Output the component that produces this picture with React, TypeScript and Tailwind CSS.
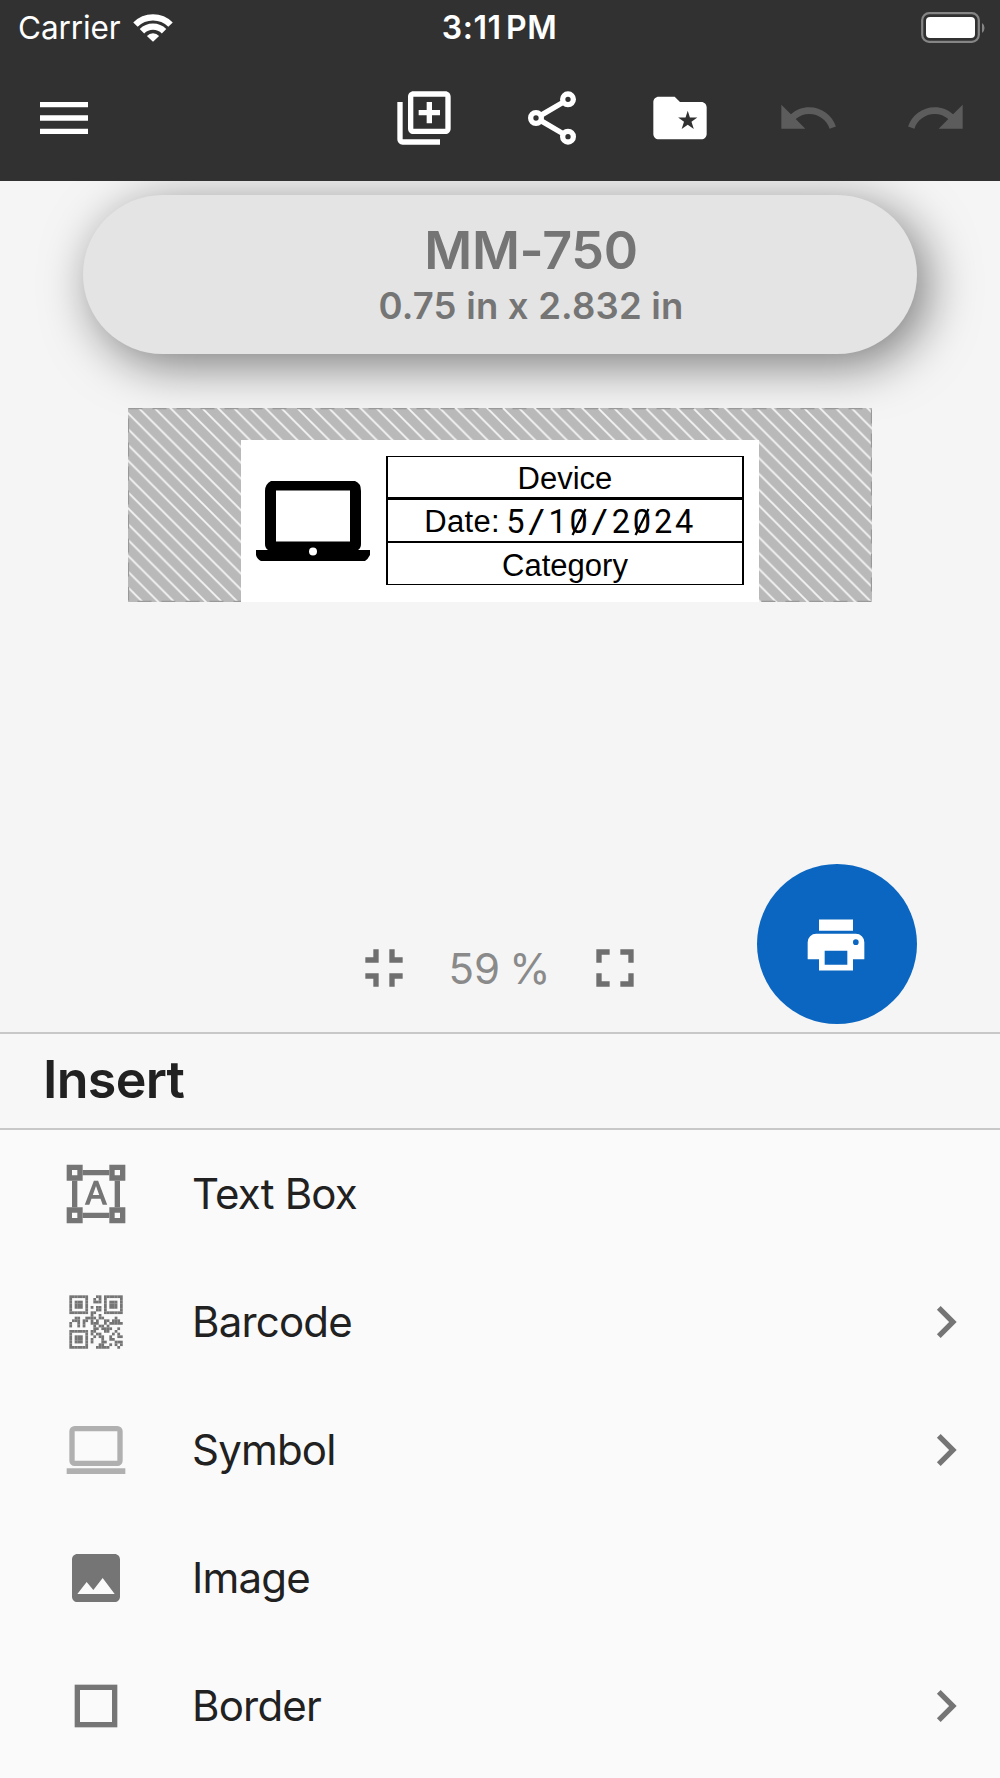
import React from "react";

const QR_ROWS = [
  "11111110001101111111",
  "10000010010101000001",
  "10111010011101011101",
  "10111010000001011101",
  "10111010101101011101",
  "10000010001101000001",
  "11111110110001111111",
  "00000000100100000000",
  "00110011110110000100",
  "01110110101001101110",
  "10010100111001011111",
  "10010100010110100000",
  "00000000011011110010",
  "11111110110001100100",
  "10000010101100001010",
  "10111010010110010011",
  "10111010100010011000",
  "10111010100011000111",
  "10000010000110010101",
  "11111110001111100010",
];

function Glyph({ children, size = 64, className = "" }: { children: React.ReactNode; size?: number; className?: string }) {
  return (
    <svg width={size} height={size} viewBox="0 0 24 24" fill="currentColor" className={`block shrink-0 ${className}`}>
      {children}
    </svg>
  );
}

function StatusBar() {
  return (
    <div className="grid h-[54px] grid-cols-3 items-center pl-[18px] pr-[15px]">
      <div className="flex items-center gap-[12px]">
        <span className="text-[31.5px] leading-[56px] tracking-[-0.100px]">Carrier</span>
        <svg width="40" height="29" viewBox="0 0 42 30" className="mt-[-1px]">
          <g fill="none" stroke="#fff" strokeWidth="6.600">
            <path d="M2.600 12a26 26 0 0 1 36.800 0" />
            <path d="M9.400 18.900a16.400 16.400 0 0 1 23.200 0" />
          </g>
          <path fill="#fff" d="M21 30l-6.400-6.200a9 9 0 0 1 12.800 0z" />
        </svg>
      </div>
      <div className="ml-[-4px] text-center text-[32px] font-semibold leading-[56px] tracking-[0.500px] [word-spacing:-4px]">3:11 PM</div>
      <div className="flex justify-end">
        <svg width="64" height="31" viewBox="0 0 64 31" className="mt-[-2px]">
          <rect x="1.200" y="1.200" width="56.600" height="28.600" rx="7" fill="none" stroke="#858585" strokeWidth="2.200" />
          <rect x="5" y="5" width="49" height="21" rx="4" fill="#fff" />
          <path d="M61 11q2.500 1.500 2.500 5t-2.500 5z" fill="#858585" />
        </svg>
      </div>
    </div>
  );
}

function Toolbar() {
  return (
    <div className="flex h-[127px] items-center px-8">
      <Glyph className="mr-auto">
        <path d="M3 6h18v2H3zM3 11h18v2H3zM3 16h18v2H3z" />
      </Glyph>
      <div className="flex gap-16">
        <Glyph>
          <path d="M4 6H2v14c0 1.100.9 2 2 2h14v-2H4z" />
          <path fillRule="evenodd" d="M20 2H8c-1.100 0-2 .9-2 2v12c0 1.100.9 2 2 2h12c1.100 0 2-.9 2-2V4c0-1.100-.9-2-2-2zm0 14H8V4h12z" />
          <path d="M13 6h2v3h3v2h-3v3h-2v-3h-3V9h3z" />
        </Glyph>
        <Glyph>
          <g fill="none" stroke="currentColor" strokeWidth="2">
            <circle cx="18" cy="5" r="2" />
            <circle cx="6" cy="12" r="2" />
            <circle cx="18" cy="19" r="2" />
            <path d="M7.800 11l8.400-4.900M7.800 13l8.400 4.900" />
          </g>
        </Glyph>
        <Glyph>
          <path d="M20 6h-8l-2-2H4c-1.100 0-2 .9-2 2v12c0 1.100.9 2 2 2h16c1.100 0 2-.9 2-2V8c0-1.100-.9-2-2-2z" />
          <path
            fill="#313131"
            d="M14.900 9.300l.82 2.550 2.780-.05-2.200 1.620.880 2.680-2.280-1.600-2.280 1.600.880-2.680-2.200-1.620 2.780.05z"
          />
        </Glyph>
        <Glyph className="text-[#5c5c5c]">
          <path d="M12.500 8c-2.650 0-5.050.990-6.900 2.600L2 7v9h9l-3.620-3.620c1.390-1.160 3.160-1.880 5.120-1.880 3.540 0 6.550 2.310 7.600 5.500l2.370-.780C21.080 11.030 17.150 8 12.500 8z" />
        </Glyph>
        <Glyph className="text-[#5c5c5c]">
          <path d="M18.400 10.600C16.550 8.990 14.150 8 11.500 8c-4.650 0-8.580 3.030-9.960 7.220L3.900 16c1.050-3.190 4.050-5.500 7.600-5.500 1.950 0 3.730.720 5.120 1.880L13 16h9V7z" />
        </Glyph>
      </div>
    </div>
  );
}

function DateDigits() {
  return (
    <span className="ml-[5px] inline-flex font-['Roboto',sans-serif] text-[32.500px]">
      {"5/10/2024".split("").map((c, i) => (
        <span key={i} className="relative inline-block w-[21.100px] text-center">
          <span className={c === "/" ? "inline-block scale-x-125" : "inline-block"}>{c}</span>
          {c === "0" && (
            <svg width="18" height="30" viewBox="0 0 18 30" className="absolute left-[1.500px] top-[7px]">
              <path d="M2.500 28L15.500 2" stroke="#000" strokeWidth="2.200" />
            </svg>
          )}
        </span>
      ))}
    </span>
  );
}

function LabelPreview() {
  return (
    <div className="relative mx-auto mt-[54px] h-[194px] w-[744px] pl-[112.500px] pr-[113px] pt-[32px]">
      <svg width="744" height="194" className="absolute inset-0">
        <defs>
          <pattern id="hatch" width="15.840" height="15.840" patternUnits="userSpaceOnUse" x="10.700" y="0">
            <path d="M-1 -1L17 17M-1 14.840L1 16.840M14.840 -1L16.840 1" stroke="#f5f5f5" strokeWidth="1.800" />
          </pattern>
        </defs>
        <rect width="744" height="194" fill="#b9b9b9" />
        <rect width="744" height="194" fill="url(#hatch)" />
        <rect x="0.500" y="0.500" width="743" height="193" fill="none" stroke="#999" strokeWidth="1.300" strokeDasharray="14 10" />
      </svg>
      <div className="relative flex h-[162px] bg-white pl-[15.500px] pt-[16px]">
        <svg width="114" height="81" viewBox="0 0 114 81" className="mt-[25px] shrink-0">
          <path
            fillRule="evenodd"
            d="M15 0h84q6 2 6 10v53q0 4-3 6h12v5q-2 4-5 6H5q-4-2-5-6v-5h12q-3-2-3-6V10q0-7 6-10zM20 9.500v51h74v-51zM57 66.500a4 4 0 1 0 0 8a4 4 0 1 0 0-8z"
          />
        </svg>
        <div className="ml-[16px] flex h-[129px] w-[358px] flex-col border-x-2 border-y border-black text-center font-['Liberation_Sans',Arial,sans-serif] text-[31px] text-black">
          <div className="h-[43px] border-b-[3px] border-black leading-[44px]">Device</div>
          <div className="flex h-[43px] justify-center border-b-[2.500px] border-black leading-[44px]">
            <span className="ml-[-11px] tracking-[0.300px]">Date:</span>
            <DateDigits />
          </div>
          <div className="h-[41px] leading-[46px]">Category</div>
        </div>
      </div>
    </div>
  );
}

function Canvas() {
  return (
    <main className="relative flex h-[851px] flex-col overflow-hidden bg-[#f5f5f5] pt-[14px]">
      <div className="mx-auto h-[159px] w-[834px] rounded-full bg-[#e4e4e4] pl-[62px] text-center font-semibold text-[#757575] shadow-[10px_11px_50px_rgba(0,0,0,0.5)]">
        <div className="pt-[26px] text-[52px] leading-[60px] tracking-[-0.300px]">MM-750</div>
        <div className="text-[36.500px] leading-[50px] tracking-[0.200px]">0.75 in x 2.832 in</div>
      </div>
      <LabelPreview />
      <div className="mt-auto mb-[32px] mr-[1px] flex items-center justify-center text-[#6f6f6f]">
        <Glyph>
          <path d="M5 16h3v3h2v-5H5zM8 8H5v2h5V5H8zM14 19h2v-3h3v-2h-5zM16 8V5h-2v5h5V8z" />
        </Glyph>
        <span className="w-[167px] text-center text-[42px] leading-[61px] tracking-[-0.200px] text-[#8a8a8a] [word-spacing:-2px]">59 %</span>
        <Glyph>
          <path d="M7 14H5v5h5v-2H7zM5 10h2V7h3V5H5zM17 17h-3v2h5v-5h-2zM14 5v2h3v3h2V5z" />
        </Glyph>
      </div>
      <button className="absolute bottom-[8px] right-[83px] flex h-[160px] w-[160px] items-center justify-center rounded-full bg-[#0a66c0] pr-[2px] pt-[1px] text-white">
        <Glyph size={68}>
          <path d="M18 3H6v4h12M19 12a1 1 0 0 1-1-1 1 1 0 0 1 1-1 1 1 0 0 1 1 1 1 1 0 0 1-1 1M16 19H8v-5h8M19 8H5a3 3 0 0 0-3 3v6h4v4h12v-4h4v-6a3 3 0 0 0-3-3z" />
        </Glyph>
      </button>
    </main>
  );
}

const items = [
  {
    label: "Text Box",
    arrow: false,
    icon: (
      <Glyph className="text-[#757575]">
        <path fillRule="evenodd" d="M1 1h6v6H1zM3 3v2h2V3zM17 1h6v6h-6zM19 3v2h2V3zM1 17h6v6H1zM3 19v2h2v-2zM17 17h6v6h-6zM19 19v2h2v-2z" />
        <path d="M7 3h10v2H7zM7 19h10v2H7zM3 7h2v10H3zM19 7h2v10h-2z" />
        <path fillRule="evenodd" d="M11.200 7h1.600L16.200 16h-1.700l-.8-2.200h-3.400L9.500 16H7.800zM10.800 12.400h2.400L12 9z" />
      </Glyph>
    ),
  },
  {
    label: "Barcode",
    arrow: true,
    icon: (
      <Glyph className="text-[#757575]">
        {QR_ROWS.map((row, y) =>
          row.split("").map((v, x) => (v === "1" ? <rect key={`${x}-${y}`} x={x + 2} y={y + 2} width="1.030" height="1.030" /> : null)),
        )}
      </Glyph>
    ),
  },
  {
    label: "Symbol",
    arrow: true,
    icon: (
      <Glyph className="text-[#b0b0b0]">
        <rect x="3" y="4" width="18" height="13" rx="1" fill="none" stroke="currentColor" strokeWidth="2" />
        <path d="M1 18.800h22V21H1z" />
      </Glyph>
    ),
  },
  {
    label: "Image",
    arrow: false,
    icon: (
      <Glyph className="text-[#757575]">
        <path d="M21 19V5c0-1.100-.9-2-2-2H5c-1.100 0-2 .9-2 2v14c0 1.100.9 2 2 2h14c1.100 0 2-.9 2-2zM8.500 13.500l2.500 3.010L14.500 12l4.500 6H5l3.500-4.500z" />
      </Glyph>
    ),
  },
  {
    label: "Border",
    arrow: true,
    icon: (
      <Glyph className="text-[#757575]">
        <rect x="5" y="5" width="14" height="14" fill="none" stroke="currentColor" strokeWidth="2" />
      </Glyph>
    ),
  },
];

export default function App() {
  return (
    <div className="h-[1778px] w-[1000px] overflow-hidden bg-[#fafafa] font-['Inter',sans-serif] text-[#212121]">
      <header className="h-[181px] bg-[#313131] text-white">
        <StatusBar />
        <Toolbar />
      </header>
      <Canvas />
      <section>
        <h2 className="flex h-[98px] items-center border-y-2 border-[#c8c8c8] bg-[#f7f7f7] pb-[2px] pl-[43px] text-[52px] font-semibold tracking-[-0.700px]">
          Insert
        </h2>
        <ul>
          {items.map((it) => (
            <li key={it.label} className="flex h-[128px] items-center pl-[64px] pr-[22px] text-[42px] tracking-[-0.800px]">
              {it.icon}
              <span className="ml-[64px] leading-[64px]">{it.label}</span>
              {it.arrow && (
                <Glyph className="ml-auto text-[#757575]">
                  <path d="M8.590 16.580L13.170 12 8.590 7.410 10 6l6 6-6 6z" />
                </Glyph>
              )}
            </li>
          ))}
        </ul>
      </section>
    </div>
  );
}
